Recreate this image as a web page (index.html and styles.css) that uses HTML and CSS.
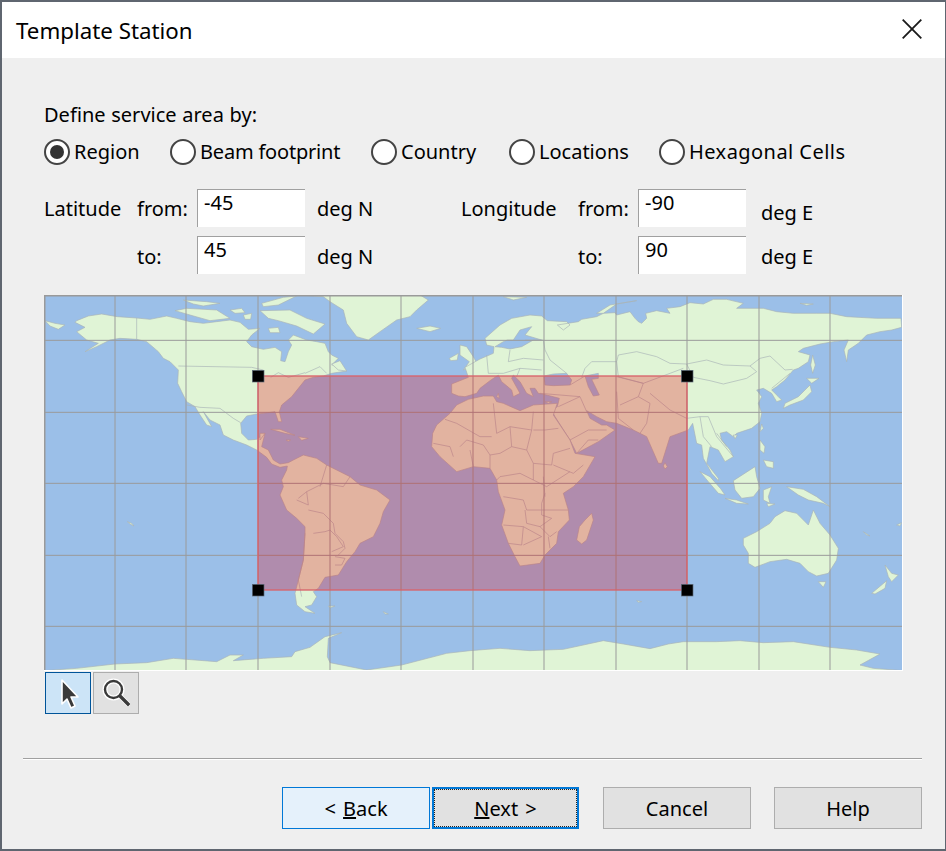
FILE: index.html
```html
<!DOCTYPE html>
<html lang="en">
<head>
<meta charset="utf-8">
<title>Template Station</title>
<link rel="stylesheet" href="styles.css">
</head>
<body>
<div class="dialog">
  <header class="titlebar">
    <span class="title">Template Station</span>
    <svg class="close" viewBox="0 0 20 20"><path d="M.7.7 19.3 19.3M19.3.7.7 19.3"/></svg>
  </header>
  <main class="content">
    <div class="define">Define service area by:</div>
    <div class="radios">
      <label class="radio"><span class="dot on"></span><span class="rtext">Region</span></label>
      <label class="radio"><span class="dot"></span><span class="rtext tight">Beam footprint</span></label>
      <label class="radio"><span class="dot"></span><span class="rtext">Country</span></label>
      <label class="radio"><span class="dot"></span><span class="rtext">Locations</span></label>
      <label class="radio"><span class="dot"></span><span class="rtext wide">Hexagonal Cells</span></label>
    </div>
    <div class="fields">
      <span class="low-t">Latitude</span><span class="low-t">from:</span><div class="field">-45</div><span class="unit low-t">deg N</span>
      <span class="low-t">Longitude</span><span class="low-t">from:</span><div class="field">-90</div><span class="unit unit-e low">deg E</span>
      <span></span><span class="low-s">to:</span><div class="field">45</div><span class="unit low-s">deg N</span>
      <span></span><span class="low-s">to:</span><div class="field">90</div><span class="unit unit-e low-s">deg E</span>
    </div>
    <div class="map">
      <svg class="mapsvg" viewBox="132 885 2574 1125" width="858" height="375">
        <rect class="sea" x="132" y="885" width="2574" height="1125"/>
        <g class="land" transform="translate(90 870)">
          <path d="M135 97 140 92 175 78 215 72 262 80 320 84 360 88 410 78 440 85 480 95 520 100 560 95 600 90 630 97 655 118 690 115 665 135 650 155 665 170 700 178 735 172 755 185 752 212 765 215 775 185 785 165 775 150 790 135 830 150 860 155 885 160 895 185 905 195 925 205 905 225 930 225 950 243 905 250 880 258 850 262 825 270 805 295 785 320 755 345 748 365 755 395 745 395 735 365 700 370 680 372 650 378 632 400 635 430 655 450 680 448 705 430 695 470 715 480 730 510 750 522 775 518 790 510 820 495 860 505 890 525 920 540 960 560 990 585 1040 600 1080 630 1060 665 1050 700 1030 740 990 760 975 785 950 815 925 855 885 862 865 895 850 905 860 920 845 945 825 950 855 970 825 965 800 945 795 910 805 870 820 810 825 730 825 710 800 685 770 660 750 615 760 590 755 570 770 540 772 528 750 532 725 522 710 502 680 480 650 465 610 450 580 435 570 405 540 390 520 365 545 410 530 405 510 375 495 350 470 335 455 305 443 280 445 240 420 215 400 205 385 185 350 155 320 148 270 145 240 150 200 170 165 185 205 160 170 150 140 125 165 112 135 97Z"/>
          <path d="M810 15 880 20 900 35 940 60 950 100 980 140 1015 150 1050 125 1100 90 1140 80 1160 60 1195 30 1170 15Z"/>
          <path d="M1160 115 1200 108 1232 115 1200 125Z"/>
          <path d="M1290 165 1310 170 1330 200 1342 222 1300 240 1318 215 1290 195Z"/>
          <path d="M1258 205 1285 190 1282 210 1262 212Z"/>
          <path d="M435 62 470 55 560 60 600 85 540 92 480 75Z"/>
          <path d="M460 30 530 35 570 40 520 48 490 42Z"/>
          <path d="M600 60 635 55 645 68 615 70Z"/>
          <path d="M640 75 665 70 662 88 645 88Z"/>
          <path d="M690 62 780 60 830 85 885 102 850 132 800 108 745 92 715 85Z"/>
          <path d="M695 40 760 22 800 18 745 45 700 50Z"/>
          <path d="M715 115 745 112 750 128 720 128Z"/>
          <path d="M905 222 930 212 950 243 925 240Z"/>
          <path d="M45 92 75 100 105 105 85 118 60 108Z"/>
          <path d="M722 418 750 418 795 436 765 430Z"/>
          <path d="M805 440 835 445 815 451Z"/>
          <path d="M768 450 782 450 775 454Z"/>
          <path d="M690 430 705 430 690 450Z"/>
          <path d="M895 948 915 948 900 954Z"/>
          <path d="M1060 965 1075 972 1065 972Z"/>
          <path d="M292 695 305 700 312 708 300 702Z"/>
          <path d="M42 1142 140 1135 255 1122 350 1118 430 1105 560 1115 600 1095 640 1095 610 1112 700 1105 785 1100 795 1085 840 1072 885 1040 935 1028 895 1045 892 1100 900 1118 1010 1140 1115 1125 1250 1090 1320 1082 1410 1075 1500 1082 1600 1078 1720 1052 1780 1062 1860 1076 1915 1062 1960 1055 2060 1055 2130 1052 2200 1058 2290 1055 2400 1072 2480 1080 2550 1092 2490 1125 2530 1135 2620 1142 2620 1160 42 1160Z"/>
        </g>
        <g class="land" transform="translate(1410 870)">
          <path d="M-55 282-5 262-15 232 30 207 70 190 72 170 50 165 45 145 90 105 125 85 180 75 215 78 232 92 290 95 300 105 280 120 262 105 325 95 335 88 380 80 400 70 435 68 440 75 480 65 495 85 505 95 515 100 530 85 527 70 560 62 600 70 590 55 630 50 660 38 700 42 730 28 770 28 820 40 800 55 880 55 920 65 970 70 1040 70 1080 70 1130 80 1220 85 1293 85 1295 112 1265 120 1230 125 1190 135 1165 160 1135 180 1130 215 1122 180 1135 150 1090 155 1050 162 1000 175 985 185 1020 195 1015 215 985 235 970 240 945 270 920 290 905 300 925 320 935 330 920 335 905 310 880 295 860 300 875 320 865 340 875 370 870 395 845 415 800 430 790 440 770 425 750 430 755 450 780 480 790 500 765 515 745 480 720 470 710 520 745 565 745 572 725 550 700 505 695 465 680 460 668 400 655 420 600 440 575 520 565 520 530 440 510 430 490 420 440 400 410 395 380 380 350 362 360 385 395 405 410 405 435 420 385 455 320 490 300 450 255 380 245 360 262 350 268 325 230 315 205 310 195 295 180 295 190 320 170 310 150 275 130 255 125 265 150 310 130 320 125 300 95 275 85 255 60 272 30 295 20 310-15 320-35 318-55 310Z"/>
          <path d="M-112 430-100 405-60 370-40 345-5 328 40 318 70 318 80 335 100 340 150 362 190 345 262 340 250 375 300 450 315 490 375 500 340 560 310 590 280 610 295 660 298 690 265 725 260 760 225 795 210 820 150 828 135 800 115 760 95 705 105 660 85 605 80 570 60 535 10 530-40 545-90 500-115 470Z"/>
          <path d="M365 670 370 690 350 750 335 762 320 750 328 710 345 690Z"/>
          <path d="M820 745 860 725 900 700 915 680 945 662 980 670 1015 705 1030 660 1050 700 1080 735 1105 775 1100 810 1075 850 1040 858 1015 845 990 820 950 808 900 815 855 832 835 820 835 790 820 765Z"/>
          <path d="M1045 875 1068 875 1060 892Z"/>
          <path d="M1245 825 1265 850 1285 855 1265 875 1255 860Z"/>
          <path d="M1205 910 1250 872 1245 895 1215 912Z"/>
          <path d="M1020 285 1025 305 1000 330 960 345 940 355 945 340 985 320 1005 300Z"/>
          <path d="M1010 265 1047 265 1025 280Z"/>
          <path d="M1028 195 1036 225 1028 250 1022 225Z"/>
          <path d="M585 518 592 530 585 537 580 528Z"/>
          <path d="M790 435 802 435 795 447Z"/>
          <path d="M875 402 880 415 870 425Z"/>
          <path d="M870 450 885 470 882 490 870 480Z"/>
          <path d="M880 510 910 515 910 535 890 530Z"/>
          <path d="M690 545 720 560 752 596 765 615 745 610 715 575Z"/>
          <path d="M765 625 800 630 835 642 800 640Z"/>
          <path d="M790 572 855 530 860 560 870 595 850 620 815 625 795 600Z"/>
          <path d="M880 600 905 590 895 620 900 640 880 630Z"/>
          <path d="M950 590 1000 598 1040 620 1080 650 1060 640 1015 630 985 615Z"/>
          <path d="M890 640 915 642 895 650Z"/>
          <path d="M1180 725 1200 738 1190 735Z"/>
          <path d="M1280 705 1295 698 1290 708Z"/>
          <path d="M100 20 170 22 130 30Z"/>
          <path d="M380 70 420 45 500 32 440 42 400 70Z"/>
          <path d="M990 40 1030 42 1010 46Z"/>
          <path d="M80 320 85 310 88 325Z"/>
          <path d="M225 335 245 335 235 340Z"/>
          <path d="M500 932 515 935 505 937Z"/>
        </g>
        <g class="water" transform="translate(1410 870)">
          <path d="M75 170 100 155 112 150 130 150 150 120 185 110 165 135 215 150 190 150 155 170 120 177 95 172Z"/>
          <path d="M222 258 250 252 290 250 305 270 300 285 250 287 225 285Z"/>
          <path d="M345 258 385 250 385 265 365 268 388 315 370 318 355 290Z"/>
        </g>
        <g class="borders" transform="translate(90 870)">
          <path d="M320 84V148M445 228 665 232 700 240M470 345 510 352 570 355 610 385 632 398M825 250 870 230 890 250"/>
          <path d="M805 625 830 605 835 645 800 630M835 660 880 670 910 700 915 730 940 755 945 775 925 795M825 730 820 810 805 870 815 920M885 725 900 720 920 740 940 770 905 785M915 800 945 805 935 825 915 825M830 605 880 580 940 590M870 590 890 525M940 590 960 560M850 730 885 725"/>
          <path d="M722 262 745 248 775 262 790 258 825 248"/>
        </g>
        <g class="borders" transform="translate(1410 870)">
          <path d="M-110 460-60 470-50 500M-75 388-40 400 30 440 65 440M70 340 80 430 120 410 185 420 190 365M190 420 225 420 265 415M185 420 170 480 190 520 245 525M120 410 125 470 90 490 60 495 40 465-10 450-30 470M0 480 10 530M60 495 60 535M125 470 170 480M245 525 250 490 300 475M250 525 310 550 340 525M190 520 190 570 150 550 90 560 80 570M190 570 230 590 300 545M220 560 225 620"/>
          <path d="M100 620 160 630 170 660 230 660 295 660M165 660 170 700 210 710 245 685 215 675 215 640 225 610M100 705 160 710 155 765 115 760M160 710 215 740 160 765M210 710 240 740 260 725M235 740 240 775"/>
          <path d="M345 235 365 215 440 215 445 195 500 185 560 200 600 220 650 222 710 210 760 225 840 228 870 205 900 198 945 240 968 238M650 222 670 262 720 272 760 282 830 265 860 245 840 228M440 215 445 260 520 280 600 250 640 235M335 262 345 235"/>
          <path d="M440 305 445 385 490 420M440 260 520 280 505 320 450 345M505 320 540 340 530 400 510 430M540 310 600 360 650 385 690 380 715 380M265 350 330 320 350 365M210 310 330 320M300 450 355 420 410 420M320 490 355 450 385 450"/>
          <path d="M690 380 700 440 725 470M715 380 740 440 790 500M740 430 770 470M905 295 960 250"/>
          <path d="M50 195 55 250 100 250 150 235 215 240M120 180 115 215 160 205 220 210M165 150 220 150 225 180 240 210M240 210 290 250M300 285 345 258M150 235 140 260"/>
        </g>
        <path class="grid" d="M345 885V2010M558 885V2010M774 885V2010M990 885V2010M1203 885V2010M1419 885V2010M1632 885V2010M1848 885V2010M2061 885V2010M2277 885V2010M2490 885V2010M132 1021H2706M132 1237H2706M132 1450H2706M132 1666H2706M132 1879H2706"/>
        <path class="frame" d="M134 2010V887H2706"/>
        <rect class="area" x="774" y="1128" width="1287" height="642"/>
        <rect class="handle" x="757" y="1111" width="35" height="35"/>
        <rect class="handle" x="2044" y="1111" width="35" height="35"/>
        <rect class="handle" x="757" y="1753" width="35" height="35"/>
        <rect class="handle" x="2044" y="1753" width="35" height="35"/>
      </svg>
    </div>
    <div class="tools">
      <div class="tool active">
        <svg viewBox="0 0 46 42" width="46" height="42"><path class="cursor" d="M17 8V32L22 27 26 36 30 34 26 25H33Z"/></svg>
      </div>
      <div class="tool">
        <svg viewBox="0 0 46 42" width="46" height="42">
          <g class="halo"><circle cx="20.5" cy="17.5" r="8.5"/><path d="M27 24 35 32"/></g>
          <g class="lens"><circle cx="20.5" cy="17.5" r="8.5"/><path d="M27 24 35 32"/></g>
        </svg>
      </div>
    </div>
  </main>
  <footer class="footer">
    <div class="rule"></div>
    <div class="buttons">
      <button class="btn hover" type="button">&lt; <u>B</u>ack</button>
      <button class="btn default" type="button"><u>N</u>ext &gt;</button>
      <button class="btn cancel" type="button">Cancel</button>
      <button class="btn help" type="button">Help</button>
    </div>
  </footer>
</div>
</body>
</html>
```

FILE: styles.css
```css
* { box-sizing: border-box; }
html, body { margin: 0; padding: 0; }
body {
  width: 946px;
  height: 851px;
  overflow: hidden;
  font-family: "Noto Sans", "Open Sans", sans-serif;
  font-size: 20px;
  color: #000;
}
.dialog {
  width: 946px;
  height: 851px;
  border: 2px solid #5f6670;
  border-right-width: 1px;
  background: #efefef;
  display: flex;
  flex-direction: column;
}
.titlebar {
  height: 56px;
  background: #fff;
  flex: none;
  display: flex;
  align-items: center;
  justify-content: space-between;
  padding: 0 23px 0 14px;
}
.title { font-size: 22.3px; }
.close { width: 20px; height: 20px; margin-top: -2px; }
.close path { stroke: #1a1a1a; stroke-width: 1.8; fill: none; }
.content { padding: 45px 0 0 42px; flex: none; }
.define { height: 24px; line-height: 24px; word-spacing: 0.5px; }
.radios {
  margin-top: 11px;
  display: grid;
  grid-template-columns: 126px 201px 138px 150px auto;
  height: 26px;
}
.radio { display: flex; align-items: center; gap: 4px; line-height: 26px; }
.rtext { padding-top: 1px; }
.tight { letter-spacing: -0.2px; }
.wide { letter-spacing: 0.45px; }
.dot {
  width: 26px;
  height: 26px;
  border-radius: 50%;
  border: 2px solid #444;
  background: #fff;
  flex: none;
  display: flex;
  align-items: center;
  justify-content: center;
}
.dot.on::after {
  content: "";
  width: 14px;
  height: 14px;
  border-radius: 50%;
  background: #333;
}
.fields {
  margin-top: 25px;
  display: grid;
  grid-template-columns: 93px 60px 108px 156px 117px 60px 108px auto;
  grid-auto-rows: 38px;
  row-gap: 9px;
  align-items: center;
  line-height: 26px;
}
.field {
  align-self: stretch;
  background: #fff;
  border-top: 1px solid #a0a0a0;
  border-left: 1px solid #a0a0a0;
  padding: 0 0 0 6px;
  line-height: 26px;
}
.unit { padding-left: 12px; }
.unit-e { padding-left: 15px; }
.low { padding-top: 9px; }
.low-t { padding-top: 2px; }
.low-s { padding-top: 3px; }
.map {
  margin-top: 21px;
  width: 859px;
  height: 376px;
  background: #fff;
  line-height: 0;
}
.sea { fill: #9bbfe8; }
.land path { fill: #e0f4d6; stroke: #a9b3b6; stroke-width: 2; stroke-linejoin: round; }
.water path { fill: #9bbfe8; stroke: #a9b3b6; stroke-width: 2; stroke-linejoin: round; }
.borders path { fill: none; stroke: #a9b3b6; stroke-width: 2; stroke-linejoin: round; }
.grid { stroke: #9a9a9a; stroke-width: 3; fill: none; }
.frame { stroke: #9a9a9a; stroke-width: 5; fill: none; }
.area { fill: rgba(233, 2, 14, 0.27); stroke: #d9626a; stroke-width: 4; }
.handle { fill: #000; stroke: #5d6a7a; stroke-width: 2; }
.tools { margin-top: 1px; margin-left: 1px; display: flex; gap: 2px; }
.tool {
  width: 46px;
  height: 42px;
  background: #e1e1e1;
  border: 1px solid #adadad;
  line-height: 0;
  position: relative;
}
.tool svg { position: absolute; left: -1px; top: -1px; }
.tool.active { background: #cce4f7; border-color: #005499; }
.cursor { fill: #3a3a3a; stroke: #fff; stroke-width: 1.6; stroke-linejoin: round; }
.halo circle, .halo path { fill: none; stroke: #fff; stroke-width: 5; stroke-linecap: round; }
.lens circle { fill: none; stroke: #3a3a3a; stroke-width: 2.4; }
.lens path { fill: none; stroke: #3a3a3a; stroke-width: 3.4; stroke-linecap: square; }
.footer { padding: 44px 23px 0 21px; flex: none; }
.rule { height: 2px; border-top: 1px solid #a0a0a0; border-bottom: 1px solid #fff; }
.buttons { margin-top: 27px; display: flex; justify-content: flex-end; }
.btn {
  width: 148px;
  height: 42px;
  font: inherit;
  color: #000;
  background: #e1e1e1;
  border: 1px solid #adadad;
  padding: 0;
  word-spacing: 2px;
}
.btn.hover { background: #e5f1fb; border-color: #0078d7; }
.btn.default {
  width: 147px;
  margin-left: 2px;
  border: 2px solid #0078d7;
  outline: 1px dotted #222;
  outline-offset: -3px;
}
.btn.cancel { margin-left: 24px; }
.btn.help { margin-left: 23px; }
```
